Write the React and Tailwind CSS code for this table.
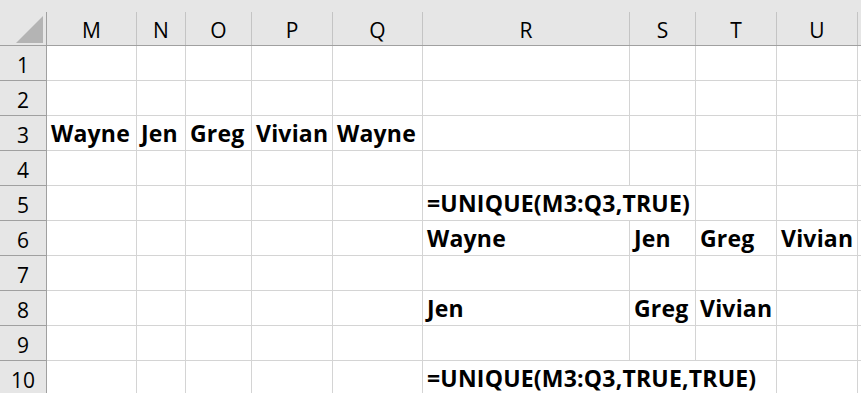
import React from 'react'

// Column layout of the sheet: row-number gutter followed by columns M..U
const COLUMNS = [
  { key: 'M', width: 'w-[90px]' },
  { key: 'N', width: 'w-[49px]' },
  { key: 'O', width: 'w-[66px]' },
  { key: 'P', width: 'w-[81px]' },
  { key: 'Q', width: 'w-[90px]' },
  { key: 'R', width: 'w-[207px]' },
  { key: 'S', width: 'w-[66px]' },
  { key: 'T', width: 'w-[81px]' },
  { key: 'U', width: 'w-[81px]' },
  { key: 'V', width: 'w-[81px]', hidden: true },
]

// Cell contents; `span` merges the cell with the next empty ones so long text overflows
const ROWS = {
  3: { M: 'Wayne', N: 'Jen', O: 'Greg', P: 'Vivian', Q: 'Wayne' },
  5: { R: { text: '=UNIQUE(M3:Q3,TRUE)', span: 2, width: 'w-[273px]' } },
  6: { R: 'Wayne', S: 'Jen', T: 'Greg', U: 'Vivian' },
  8: { R: 'Jen', S: 'Greg', T: 'Vivian' },
  10: { R: { text: '=UNIQUE(M3:Q3,TRUE,TRUE)', span: 3, width: 'w-[354px]' } },
}

const FONT = "font-['Open_Sans','Noto_Sans',sans-serif]"

function HeaderRow() {
  return (
    <div className="flex h-[46px] bg-[#e6e6e6] border-b border-[#a0a0a0]">
      <div className="w-[47px] shrink-0 pt-[12px]">
        <div className="h-full border-r border-[#a0a0a0] relative">
          <svg className="absolute left-[16px] top-[4px]" width="27" height="27" viewBox="0 0 27 27">
            <polygon points="0,27 27,27 27,0" fill="#b4b4b4" />
          </svg>
        </div>
      </div>
      {COLUMNS.map((c) => (
        <div key={c.key} className={`${c.width} shrink-0 pt-[12px]`}>
          <div className="h-full border-r border-[#c4c4c4] flex items-center justify-center pt-[3px] text-[21px] leading-[28px] text-black">
            {c.hidden ? null : c.key}
          </div>
        </div>
      ))}
    </div>
  )
}

function Row({ n }) {
  const data = ROWS[n] || {}
  const cells = []
  let skip = 0
  COLUMNS.forEach((c) => {
    if (skip > 0) {
      skip--
      return
    }
    const v = data[c.key]
    const text = typeof v === 'object' && v ? v.text : v
    const width = typeof v === 'object' && v ? v.width : c.width
    if (typeof v === 'object' && v) skip = v.span - 1
    cells.push(
      <div
        key={c.key}
        className={`${width} shrink-0 border-r border-b border-[#d4d4d4] flex items-end pl-[4px] pb-[2px] whitespace-nowrap overflow-visible font-bold text-[23px] leading-[30px] tracking-[0.2px] text-black`}
      >
        {text}
      </div>
    )
  })
  return (
    <div className="flex h-[35px]">
      <div className="w-[47px] shrink-0 bg-[#e6e6e6] border-r border-b border-[#a0a0a0] flex items-end justify-center pb-[1px] text-[21px] leading-[28px] text-black">
        {n}
      </div>
      {cells}
    </div>
  )
}

export default function App() {
  return (
    <div className={`w-[861px] h-[393px] overflow-hidden bg-white ${FONT}`}>
      <HeaderRow />
      {[1, 2, 3, 4, 5, 6, 7, 8, 9, 10].map((n) => (
        <Row key={n} n={n} />
      ))}
    </div>
  )
}
